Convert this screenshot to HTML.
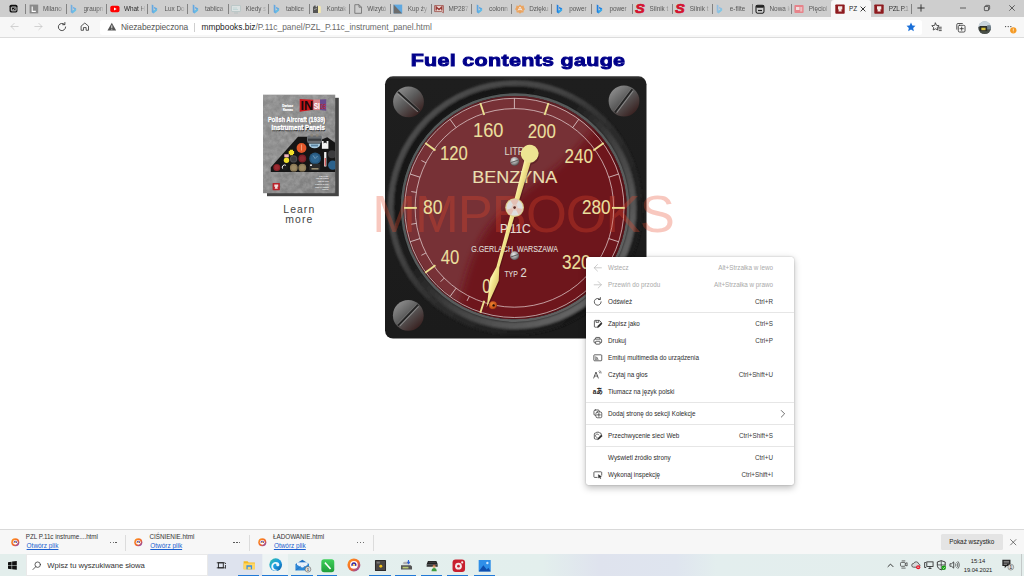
<!DOCTYPE html>
<html lang="pl">
<head>
<meta charset="utf-8">
<title>PZL P.11c instrument panel</title>
<style>
*{box-sizing:border-box;margin:0;padding:0}
html,body{width:1024px;height:576px;overflow:hidden;background:#fff}
body{position:relative;font-family:"Liberation Sans",sans-serif;color:#222}
.abs{position:absolute}
svg{overflow:visible}
/* ---------- tab strip ---------- */
#tabs{position:absolute;left:0;top:0;width:1024px;height:17px;background:#cecece}
.tab{position:absolute;top:0;height:17px;width:40px}
.tab .t{position:absolute;left:18px;top:0;width:20.5px;height:17px;overflow:hidden;font-size:6.4px;line-height:17px;color:#585858;white-space:nowrap;letter-spacing:-.02px;-webkit-mask-image:linear-gradient(90deg,#000 70%,rgba(0,0,0,.12) 99%);mask-image:linear-gradient(90deg,#000 70%,rgba(0,0,0,.12) 99%)}
.tab svg{position:absolute;left:3.6px;top:3.5px;width:10px;height:10px}
.sep{position:absolute;top:3.5px;width:1px;height:10.3px;background:#838383}
#tabact{position:absolute;left:831.3px;top:0;width:40px;height:17px;background:#f7f7f7;border-radius:3px 3px 0 0}
/* ---------- toolbar ---------- */
#bar{position:absolute;left:0;top:17px;width:1024px;height:21px;background:#f7f7f7;border-bottom:1px solid #dcdcdc}
#addr{position:absolute;left:100.3px;top:2.5px;width:821.3px;height:15.5px;background:#fff;border-radius:2.5px}
#addr span{position:absolute;top:0;line-height:15.5px;font-size:8.4px;white-space:nowrap;letter-spacing:0}
#bar svg{position:absolute}
/* ---------- page ---------- */
#title{position:absolute;left:317.8px;top:47.1px;width:400px;text-align:center;font-size:17.4px;font-weight:bold;color:#00008a;letter-spacing:.25px;line-height:26px;-webkit-text-stroke:.9px #00008a;transform:scaleX(1.235);white-space:nowrap}
#learn{position:absolute;left:269.3px;top:204.5px;width:60px;text-align:center;font-size:10.4px;line-height:10.5px;color:#444;letter-spacing:1.08px}
#wm{position:absolute;left:372.4px;top:172px;font-size:52px;line-height:60px;color:rgba(232,72,42,.3);letter-spacing:-.6px;white-space:nowrap}
/* ---------- context menu ---------- */
#menu{position:absolute;left:586px;top:257px;width:208.3px;height:227.8px;background:#fff;border-radius:2.5px;box-shadow:0 2.5px 7px rgba(0,0,0,.26),0 0 1.5px rgba(0,0,0,.3)}
.mi{position:absolute;left:0;width:208px;height:17px;font-size:6.3px;line-height:17px;color:#2b2b2b;white-space:nowrap}
.mi .l{position:absolute;left:22px;top:0}
.mi .r{position:absolute;right:21px;top:0;color:#3a3a3a}
.mi.dis,.mi.dis .r{color:#a9a9a9}
.mi svg{position:absolute;left:6.700px;top:3.700px;width:9.600px;height:9.600px}
.ms{position:absolute;left:0;width:208.3px;height:1px;background:#e6e6e6}
/* ---------- downloads ---------- */
#dl{position:absolute;left:0;top:528.6px;width:1024px;height:25.7px;background:#f7f7f7;border-top:1px solid #d9d9d9}
.dli{position:absolute;top:0;height:24px}
.dli .n{position:absolute;left:25.8px;top:3.4px;font-size:6.3px;line-height:8px;color:#333;white-space:nowrap;letter-spacing:-.02px}
.dli .o{position:absolute;left:26.6px;top:12.9px;font-size:6.45px;line-height:8px;color:#1a5fd0;text-decoration:underline;white-space:nowrap;letter-spacing:0}
.dli .d{position:absolute;top:12.300px;width:8px;height:2px}
.dli .d i{position:absolute;top:0;width:1.3px;height:1.3px;border-radius:50%;background:#444}
.dsep{position:absolute;top:5px;width:1px;height:16px;background:#dcdcdc}
/* ---------- taskbar ---------- */
#task{position:absolute;left:0;top:554.3px;width:1024px;height:21.7px;background:linear-gradient(90deg,#e3eeec 0,#e3eeec 2.5%,#dee3ee 2.6%,#dee3ee 25.6%,#eef4f4 25.65%,#eef4f4 28.1%,#e4efee 28.15%,#e3efed 53%,#dfe3ee 58.5%,#dfe5ef 66%,#e3eeee 70%,#e4eeec 100%)}
#search{position:absolute;left:25.800px;top:0;width:182.700px;height:21.700px;background:#fff;border:1px solid #e9e9e9}
#search span{position:absolute;left:20.5px;top:0;line-height:21px;font-size:7.7px;color:#333;white-space:nowrap;letter-spacing:-.05px}
#task svg{position:absolute;margin-top:-.6px}
.ul{position:absolute;top:20.500px;height:1.200px;background:#1f78d6}
</style>
</head>
<body>
<div id="tabs">
<svg viewBox="0 0 10 10" style="position:absolute;left:8.500px;top:4px;width:9px;height:9px"><rect x=".6" y=".8" width="8.800" height="8.600" rx="1.800" fill="#111"/><rect x="2.600" y="3.400" width="5.200" height="4.200" rx=".6" fill="none" stroke="#fff" stroke-width=".9"/><path d="M3.800 5.500l1 1 1.800-1.800" stroke="#fff" stroke-width=".7" fill="none"/></svg>
<div id="tabact"></div>
<div class="sep" style="left:25px"></div>
<div class="tab" style="left:25px"><svg viewBox="0 0 10 10"><rect x=".6" y=".6" width="8.600" height="8.800" fill="#8a8a8a"/><path d="M3.200 2.400v5h3.600" fill="none" stroke="#fff" stroke-width="1.100"/></svg><span class="t">Milano</span></div>
<div class="sep" style="left:65.5px"></div>
<div class="tab" style="left:65.5px"><svg viewBox="0 0 10 10" opacity="0.8"><g transform="translate(-.2 0) scale(.84 1)"><path d="M2.300 .600l2 .700v5.500l2.500-1.400-1.300-.6-.8-2 4 1.400v2.200L4.300 9.600l-2-1.300z" fill="#5aa7e8"/><path d="M4.300 6.800l2.500-1.400 1.900-1v2.000L4.300 9.600z" fill="#4fd0ee" opacity=".55"/></g></svg><span class="t">graupn</span></div>
<div class="sep" style="left:106px"></div>
<div class="tab" style="left:106px"><svg viewBox="0 0 10 10"><rect x=".3" y="1.800" width="9.200" height="6.500" rx="1.800" fill="#f00"/><path d="M4 3.500v3.100l2.700-1.550z" fill="#fff"/></svg><span class="t" style="color:#2a2a2a">What H</span></div>
<div class="sep" style="left:146.5px"></div>
<div class="tab" style="left:146.5px"><svg viewBox="0 0 10 10" opacity="0.8"><g transform="translate(-.2 0) scale(.84 1)"><path d="M2.300 .600l2 .700v5.500l2.500-1.400-1.300-.6-.8-2 4 1.400v2.200L4.300 9.600l-2-1.300z" fill="#4a9fe6"/><path d="M4.300 6.800l2.500-1.400 1.900-1v2.000L4.300 9.600z" fill="#4fd0ee" opacity=".55"/></g></svg><span class="t">Lux Do</span></div>
<div class="sep" style="left:187px"></div>
<div class="tab" style="left:187px"><svg viewBox="0 0 10 10" opacity="0.8"><g transform="translate(-.2 0) scale(.84 1)"><path d="M2.300 .600l2 .700v5.500l2.500-1.400-1.300-.6-.8-2 4 1.400v2.200L4.300 9.600l-2-1.300z" fill="#4a9fe6"/><path d="M4.300 6.800l2.500-1.400 1.900-1v2.000L4.300 9.600z" fill="#4fd0ee" opacity=".55"/></g></svg><span class="t">tablica</span></div>
<div class="sep" style="left:227.5px"></div>
<div class="tab" style="left:227.5px"><svg viewBox="0 0 10 10" opacity=".55"><rect x=".5" y="1.500" width="9" height="6" rx=".6" fill="#e8f4f4" stroke="#8fb0b0" stroke-width=".6"/><path d="M3 9h4" stroke="#8fb0b0" stroke-width=".7"/><path d="M2 4h4M2 5.500h5" stroke="#9cc" stroke-width=".6"/></svg><span class="t">Kiedy s</span></div>
<div class="sep" style="left:268px"></div>
<div class="tab" style="left:268px"><svg viewBox="0 0 10 10" opacity="0.8"><g transform="translate(-.2 0) scale(.84 1)"><path d="M2.300 .600l2 .700v5.500l2.500-1.400-1.300-.6-.8-2 4 1.400v2.200L4.300 9.600l-2-1.300z" fill="#4a9fe6"/><path d="M4.300 6.800l2.500-1.400 1.900-1v2.000L4.300 9.600z" fill="#4fd0ee" opacity=".55"/></g></svg><span class="t">tablice</span></div>
<div class="sep" style="left:308.6px"></div>
<div class="tab" style="left:308.6px"><svg viewBox="0 0 10 10"><path d="M1 9V3l2.200-2 .8 2.500L6 1.500V9z" fill="#555"/><path d="M6 1.500l2.800 1V9H6z" fill="#f4e9b0"/><path d="M2 5.500l3 -1" stroke="#ddd" stroke-width=".6"/></svg><span class="t">Kontak</span></div>
<div class="sep" style="left:349.3px"></div>
<div class="tab" style="left:349.3px"><svg viewBox="0 0 10 10" fill="none" stroke="#6a6a6a" stroke-width=".8" stroke-linejoin="round"><path d="M1.800 .700h4.200l2.500 2.500v6.100H1.800z"/><path d="M6 .700v2.500h2.500"/></svg><span class="t">Wizytó</span></div>
<div class="sep" style="left:389.7px"></div>
<div class="tab" style="left:389.7px"><svg viewBox="0 0 10 10"><rect x=".6" y=".6" width="8.600" height="8.800" fill="#5fa8e0"/><path d="M.6 .6L9.200 9.400H.6z" fill="#6c6c6c"/></svg><span class="t">Kup ży</span></div>
<div class="sep" style="left:430.5px"></div>
<div class="tab" style="left:430.5px"><svg viewBox="0 0 10 10"><path d="M.6 1.600h8.800v7.200L7.600 7.600H.6z" fill="#ead8d4" stroke="#9a4a44" stroke-width=".8"/><path d="M2.200 6.600V3L5 5.600 7.800 3v3.600" fill="none" stroke="#9a3a35" stroke-width="1.300"/></svg><span class="t">MP287</span></div>
<div class="sep" style="left:471px"></div>
<div class="tab" style="left:471px"><svg viewBox="0 0 10 10" opacity="0.85"><g transform="translate(-.2 0) scale(.84 1)"><path d="M2.300 .600l2 .700v5.500l2.500-1.400-1.300-.6-.8-2 4 1.400v2.200L4.300 9.600l-2-1.300z" fill="#4a9fe6"/><path d="M4.300 6.800l2.500-1.400 1.900-1v2.000L4.300 9.600z" fill="#4fd0ee" opacity=".55"/></g></svg><span class="t">colonn</span></div>
<div class="sep" style="left:511.2px"></div>
<div class="tab" style="left:511.2px"><svg viewBox="0 0 10 10" opacity=".8"><path d="M5 .5l1.600 1.400 2-.3.400 2 1 1.600-1.400 1.300-.1 2.100-2-.1L5 9.800 3.600 8.500l-2 .1-.1-2.100L.1 5.200l1-1.600.4-2 2 .3z" fill="#f39a45"/><path d="M3 6.500l2-3.600 2 3.600M3.800 5.600h2.400" stroke="#fff" stroke-width=".8" fill="none"/></svg><span class="t">Dzięku</span></div>
<div class="sep" style="left:551.3px"></div>
<div class="tab" style="left:551.3px"><svg viewBox="0 0 10 10" opacity="1"><g transform="translate(-.2 0) scale(.84 1)"><path d="M2.300 .600l2 .700v5.500l2.500-1.400-1.300-.6-.8-2 4 1.400v2.200L4.300 9.600l-2-1.300z" fill="#1f7fe0"/><path d="M4.300 6.800l2.500-1.400 1.900-1v2.000L4.300 9.600z" fill="#4fd0ee" opacity=".55"/></g></svg><span class="t">power</span></div>
<div class="sep" style="left:591.4px"></div>
<div class="tab" style="left:591.4px"><svg viewBox="0 0 10 10" opacity="1"><g transform="translate(-.2 0) scale(.84 1)"><path d="M2.300 .600l2 .700v5.500l2.500-1.400-1.300-.6-.8-2 4 1.400v2.200L4.300 9.600l-2-1.300z" fill="#1f7fe0"/><path d="M4.300 6.800l2.500-1.400 1.900-1v2.000L4.300 9.600z" fill="#4fd0ee" opacity=".55"/></g></svg><span class="t">power</span></div>
<div class="sep" style="left:631.6px"></div>
<div class="tab" style="left:631.6px"><svg viewBox="0 0 10 10"><text x=".2" y="9.200" font-family="Liberation Sans,sans-serif" font-size="12" font-weight="bold" font-style="italic" fill="#d3122e" stroke="#d3122e" stroke-width=".7" textLength="9.400" lengthAdjust="spacingAndGlyphs">S</text></svg><span class="t">Silnik t</span></div>
<div class="sep" style="left:671.8px"></div>
<div class="tab" style="left:671.8px"><svg viewBox="0 0 10 10"><text x=".2" y="9.200" font-family="Liberation Sans,sans-serif" font-size="12" font-weight="bold" font-style="italic" fill="#d3122e" stroke="#d3122e" stroke-width=".7" textLength="9.400" lengthAdjust="spacingAndGlyphs">S</text></svg><span class="t">Silnik t</span></div>
<div class="sep" style="left:711.8px"></div>
<div class="tab" style="left:711.8px"><svg viewBox="0 0 10 10" opacity="0.7"><g transform="translate(-.2 0) scale(.84 1)"><path d="M2.300 .600l2 .700v5.500l2.500-1.400-1.300-.6-.8-2 4 1.400v2.200L4.300 9.600l-2-1.300z" fill="#7ab8ea"/><path d="M4.300 6.800l2.500-1.400 1.900-1v2.000L4.300 9.600z" fill="#4fd0ee" opacity=".55"/></g></svg><span class="t">e-flite</span></div>
<div class="sep" style="left:751.5px"></div>
<div class="tab" style="left:751.5px"><svg viewBox="0 0 10 10"><rect x="1" y="1.200" width="8" height="8" rx="1.600" fill="none" stroke="#222" stroke-width="1.100"/><rect x="1" y="1.200" width="8" height="2.600" rx="1.200" fill="#222"/><path d="M3 6.500h4" stroke="#222" stroke-width="1.200"/></svg><span class="t">Nowa k</span></div>
<div class="sep" style="left:790.8px"></div>
<div class="tab" style="left:790.8px"><svg viewBox="0 0 10 10" opacity=".75"><rect x=".4" y="1" width="9.200" height="8" rx="1" fill="#ef6a74"/><rect x="2" y="3" width="3.500" height="3" fill="#fde4e4"/><rect x="6.200" y="3" width="2" height="4.500" fill="#f9b8bb"/></svg><span class="t">Pięciol</span></div>
<div class="tab" style="left:831px"><svg viewBox="0 0 10 10"><rect x=".3" y=".4" width="9.400" height="9.400" rx=".8" fill="#8e1b1f"/><path d="M3 2.200h4.300v3.400H6.200l.6 2H3.400l.5-2H3z" fill="#f3e6e2"/></svg><span class="t" style="color:#222;width:11px;-webkit-mask-image:none;mask-image:none">PZ</span></div>
<div class="tab" style="left:870.7px"><svg viewBox="0 0 10 10"><rect x=".3" y=".4" width="9.400" height="9.400" rx=".8" fill="#8e1b1f"/><path d="M3 2.200h4.300v3.400H6.200l.6 2H3.400l.5-2H3z" fill="#f3e6e2"/></svg><span class="t" style="letter-spacing:-.3px;color:#333">PZL P.1</span></div>
<div class="sep" style="left:911.3px"></div>
<svg viewBox="0 0 10 10" style="position:absolute;left:859.500px;top:5.700px;width:6px;height:6px" stroke="#222" stroke-width="1.500" fill="none"><path d="M1 1l8 8M9 1L1 9"/></svg>
<svg viewBox="0 0 10 10" style="position:absolute;left:916.500px;top:4.300px;width:8px;height:8px" stroke="#222" stroke-width="1.100" fill="none"><path d="M5 .5v9M.5 5h9"/></svg>
<svg viewBox="0 0 10 10" style="position:absolute;left:959.500px;top:5px;width:6px;height:6px" stroke="#333" stroke-width="1.200" fill="none"><path d="M0 5h10"/></svg>
<svg viewBox="0 0 10 10" style="position:absolute;left:984px;top:5px;width:6px;height:6px" stroke="#333" stroke-width="1.200" fill="none"><rect x=".6" y="2.400" width="7" height="7" rx="1"/><path d="M2.600 2.400V1.600a1 1 0 0 1 1-1h4.800a1 1 0 0 1 1 1v4.800a1 1 0 0 1-1 1h-.8"/></svg>
<svg viewBox="0 0 10 10" style="position:absolute;left:1008.700px;top:5px;width:6px;height:6px" stroke="#333" stroke-width="1.200" fill="none"><path d="M.5 .5l9 9M9.500 .5l-9 9"/></svg>
</div>
<div id="bar">
<svg viewBox="0 0 16 16" style="left:10.200px;top:5.300px;width:9px;height:9px" fill="none" stroke="#c4c4c4" stroke-width="1.300" stroke-linecap="round" stroke-linejoin="round"><path d="M14.500 8H1.800M7.400 2.400 1.800 8l5.600 5.600"/></svg>
<svg viewBox="0 0 16 16" style="left:33.800px;top:5.300px;width:9px;height:9px" fill="none" stroke="#c4c4c4" stroke-width="1.300" stroke-linecap="round" stroke-linejoin="round"><path d="M1.500 8h12.700M8.600 2.400 14.200 8l-5.600 5.600"/></svg>
<svg viewBox="0 0 16 16" style="left:56.700px;top:5.300px;width:10px;height:10px" fill="none" stroke="#333" stroke-width="1.400" stroke-linecap="round" stroke-linejoin="round"><path d="M13.800 8a5.800 5.800 0 1 1-2-4.400"/><path d="M12.600 .8v3.500H9.100"/></svg>
<svg viewBox="0 0 16 16" style="left:80.400px;top:5.300px;width:9.600px;height:9.600px" fill="none" stroke="#333" stroke-width="1.350" stroke-linejoin="round"><path d="M1.800 13.800V6.900L8 1.700l6.200 5.200v6.900h-4V9.300H5.800v4.500z"/></svg>
<div id="addr">
<svg viewBox="0 0 16 16" style="left:6.900px;top:2.900px;width:9.600px;height:9.400px"><path d="M8 1.200 15.400 14.600H.6z" fill="#555"/><path d="M8 5.800v4.600M8 11.600v1.400" stroke="#fff" stroke-width="1.500"/></svg>
<span style="left:20.600px;color:#555;letter-spacing:-.08px">Niezabezpieczona</span>
<i style="position:absolute;left:93.700px;top:3.500px;width:1px;height:8.500px;background:#cfcfcf"></i>
<span style="left:101.200px;color:#1f1f1f">mmpbooks.biz<span style="position:static;color:#6a6a6a">/P.11c_panel/PZL_P.11c_instrument_panel.html</span></span>
<svg viewBox="0 0 16 16" style="left:805.500px;top:2.800px;width:10px;height:10px"><path d="M8 .8l2.200 4.700 5 .6-3.700 3.500 1 5L8 12.100 3.500 14.600l1-5L.8 6.100l5-.6z" fill="#1a6fd8"/></svg>
</div>
<svg viewBox="0 0 16 16" style="left:931.300px;top:5.300px;width:11px;height:11px" fill="none" stroke="#333" stroke-width="1.200" stroke-linejoin="round" stroke-linecap="round"><path d="M6.500 1.500l1.600 3.400 3.700.5-2.700 2.600.6 3.700-3.200-1.800-3.300 1.800.6-3.700L1.100 5.400l3.800-.5z"/><path d="M11 10h4M11.800 12.500h3.200M10.500 7.600h4.500"/></svg>
<svg viewBox="0 0 16 16" style="left:954.500px;top:5px;width:11px;height:11px" fill="none" stroke="#333" stroke-width="1.200" stroke-linejoin="round" stroke-linecap="round"><rect x="4.800" y="4.800" width="9.800" height="9.800" rx="1.800"/><path d="M9.700 7.300v4.800M7.300 9.700h4.800"/><path d="M2.600 10.500V4a1.800 1.800 0 0 1 1.800-1.800h6.300"/></svg>
<svg viewBox="0 0 16 16" style="left:977.700px;top:3.600px;width:13.400px;height:13.400px"><defs><clipPath id="cav"><circle cx="8" cy="8" r="7.600"/></clipPath></defs><g clip-path="url(#cav)"><rect width="16" height="16" fill="#9aa8b4"/><rect y="0" width="16" height="6" fill="#c9d4dc"/><rect x="0" y="7" width="16" height="9" fill="#4a4f48"/><rect x="2" y="6" width="9" height="6" fill="#2a2c2a"/><rect x="4" y="8" width="5" height="3" fill="#d8c23a"/><rect x="11" y="5" width="5" height="5" fill="#71808c"/></g></svg>
<svg viewBox="0 0 16 16" style="left:1004px;top:5px;width:10px;height:10px"><circle cx="2.500" cy="7.200" r="1" fill="#333"/><circle cx="6.700" cy="7.200" r="1" fill="#333"/><circle cx="10.900" cy="7.200" r="1" fill="#333"/></svg>
<svg viewBox="0 0 10 10" style="left:1010px;top:9.800px;width:6.600px;height:6.600px"><circle cx="5" cy="5" r="4.800" fill="#f59a23"/><path d="M5 2.200v3.600M5 7v1" stroke="#fff" stroke-width="1.100"/></svg>
</div>
<div id="title">Fuel contents gauge</div>
<svg id="book" width="84" height="110" viewBox="259 91 84 110" style="position:absolute;left:259px;top:91px">
<defs>
<filter id="fn" x="0" y="0" width="100%" height="100%"><feTurbulence type="fractalNoise" baseFrequency=".18" numOctaves="3" seed="7" result="n"/><feColorMatrix in="n" type="matrix" values="0 0 0 0 .56  0 0 0 0 .56  0 0 0 0 .56  .9 .9 .9 0 -1.05"/><feComposite operator="in" in2="SourceGraphic"/></filter>
<clipPath id="ccov"><rect x="263" y="94.7" width="72.2" height="98.5"/></clipPath>
<linearGradient id="gcov" x1="0" y1="0" x2="1" y2="1"><stop offset="0" stop-color="#8b8b8b"/><stop offset=".5" stop-color="#868686"/><stop offset="1" stop-color="#7a7a7a"/></linearGradient>
</defs>
<rect x="267" y="97.8" width="71.8" height="98.4" fill="#444"/>
<rect x="263" y="94.7" width="72.2" height="98.5" fill="url(#gcov)"/>
<rect x="263" y="94.7" width="72.2" height="98.5" fill="#b4b4b4" filter="url(#fn)" opacity=".55"/>
<g clip-path="url(#ccov)">
<path d="M270.8 167.2L298 136.7H307.2V141H321.8V139.5L327.3 137.3L335.5 143V171.9H270.8z" fill="#151515"/>
<rect x="307.2" y="135.5" width="14.6" height="7.5" rx="1.5" fill="#6a6e72"/><rect x="310.5" y="134.2" width="2.6" height="2.4" fill="#8a8478"/><rect x="315.8" y="134.2" width="2.6" height="2.4" fill="#8a8478"/><rect x="308" y="138.6" width="13" height="2.2" fill="#3a3d40"/>
<path d="M308.6 143.6h11.9a6 5.4 0 0 1-11.9 0z" fill="#a8cbe0"/><rect x="311" y="144.6" width="7" height="1.8" fill="#5d86a4"/>
<circle cx="301.5" cy="148" r="4.9" fill="#e2582a"/><path d="M301.5 144.5v6" stroke="#f7c9a8" stroke-width=".6"/>
<rect x="321.9" y="141" width="6.5" height="7.8" fill="#f2f2f2"/><path d="M323.6 141v2.600l1.500-1 1.500 1V141" fill="#151515"/>
<path d="M289.800 149.800h3.200v1.100h1.100v3.200h-1.100v1.100h-3.200v-1.100h-1.100v-3.200h1.100z" fill="#f0e02a"/>
<rect x="284.300" y="154.300" width="4.500" height="3" fill="#f0b4bc"/>
<circle cx="286.500" cy="160.200" r="2.700" fill="#f0e02a"/>
<circle cx="293.600" cy="158.900" r="3.700" fill="#4a4a4c"/><circle cx="293.600" cy="158.900" r="2.500" fill="#3a3a3c"/>
<circle cx="302.300" cy="158.500" r="3.900" fill="#7c1f26"/><circle cx="302.300" cy="158.500" r="2.600" fill="#8b2a30"/>
<circle cx="315.100" cy="158.500" r="5.900" fill="#27587e"/><circle cx="315.100" cy="158.500" r="4.300" fill="#2f6690"/><path d="M315.100 158.500l-2-3M315.100 158.500l2.500-2.500" stroke="#a9c4d8" stroke-width=".5"/>
<rect x="324.100" y="151.900" width="2.300" height="14.600" rx=".6" fill="#efefef"/><rect x="324.700" y="158" width="1.100" height="7.800" fill="#c83a3a"/>
<circle cx="332" cy="154.300" r="4" fill="#3c3c3e"/>
<circle cx="332.700" cy="165.200" r="4.600" fill="#2c628c"/>
<circle cx="276.800" cy="167.400" r="3.500" fill="#8a1f26"/><circle cx="276.800" cy="167.400" r="2.300" fill="#9a2b32"/>
<circle cx="284.700" cy="167.200" r="3.300" fill="#1c1c1c"/><path d="M282.600 168.600a2.400 2.400 0 0 1 3.300-3.300" fill="none" stroke="#f0f0f0" stroke-width="1"/>
<circle cx="293.800" cy="167.700" r="3.900" fill="#8c7a56"/><circle cx="293.800" cy="167.700" r="2.500" fill="#9c8a64"/>
<circle cx="302.300" cy="167.700" r="3.900" fill="#8c7a56"/><circle cx="302.300" cy="167.700" r="2.500" fill="#9c8a64"/>
<rect x="309.200" y="163.800" width="11" height="6.600" rx=".8" fill="#2b2b2b"/><rect x="310" y="164.400" width="2" height="1.600" fill="#ddd"/><rect x="311.500" y="168.300" width="7" height="1.100" fill="#c8b890"/>
</g>
<g><path d="M299.700 99l13.800 .8v10l-13.800 2z" fill="#c8161d"/><rect x="313.500" y="99.500" width="6.500" height="10.600" fill="#d9868c"/><path d="M320 99.500l6.200 -.3v11.600l-6.200 -.7z" fill="#6a4a8e"/>
<text x="300.400" y="110.200" font-family="Liberation Sans,sans-serif" font-weight="bold" font-size="13.500" textLength="12.600" lengthAdjust="spacingAndGlyphs" fill="#1a0a0a">IN</text>
<text x="313.700" y="108.800" font-family="Liberation Sans,sans-serif" font-weight="bold" font-size="9.500" textLength="6.200" lengthAdjust="spacingAndGlyphs" fill="#fff">SI</text>
<text x="320.300" y="108.500" font-family="Liberation Sans,sans-serif" font-weight="bold" font-size="8" textLength="5.600" lengthAdjust="spacingAndGlyphs" fill="#b0283a">DE</text></g>
<g font-family="Liberation Sans,sans-serif" font-weight="bold" fill="#fff" stroke="#fff" stroke-width=".2" font-size="3.700"><text x="282.300" y="107.300" textLength="10.600" lengthAdjust="spacingAndGlyphs">Dariusz</text><text x="282.900" y="111" textLength="10" lengthAdjust="spacingAndGlyphs">Karnas</text></g>
<g font-family="Liberation Sans,sans-serif" font-weight="bold" font-size="6.400" fill="#fff" stroke="#fff" stroke-width=".42" paint-order="stroke"><text x="268.300" y="122.300" fill="#333" stroke="#333" stroke-width=".5" textLength="57.400" lengthAdjust="spacingAndGlyphs">Polish Aircraft (1939)</text><text x="267.900" y="121.800" textLength="57.400" lengthAdjust="spacingAndGlyphs">Polish Aircraft (1939)</text><text x="271.900" y="130.600" fill="#333" stroke="#333" stroke-width=".5" textLength="53.400" lengthAdjust="spacingAndGlyphs">Instrument Panels</text><text x="271.500" y="130.100" textLength="53.400" lengthAdjust="spacingAndGlyphs">Instrument Panels</text></g>
<g font-family="Liberation Sans,sans-serif" font-weight="bold" font-size="2.300" fill="#f2f2f2" text-anchor="end">
<text x="328.500" y="176.80" textLength="9.5" lengthAdjust="spacingAndGlyphs">PZL P.11c</text>
<text x="328.500" y="179.48" textLength="12.6" lengthAdjust="spacingAndGlyphs">PZL.23 Karaś</text>
<text x="328.500" y="182.16" textLength="10.5" lengthAdjust="spacingAndGlyphs">PZL.37 Łoś</text>
<text x="328.500" y="184.84" textLength="13.2" lengthAdjust="spacingAndGlyphs">Lublin R-XIII</text>
<text x="328.500" y="187.52" textLength="13.2" lengthAdjust="spacingAndGlyphs">RWD-14 Czapla</text>
<text x="328.500" y="190.20" textLength="6.3" lengthAdjust="spacingAndGlyphs">PWS-26</text>
</g>
<rect x="272.600" y="182.900" width="7.300" height="7.300" rx=".6" fill="#b8232a"/><path d="M274.300 184.400h3.900v2.300h-.9l.5 2h-3.100l.5-2h-.9z" fill="#f3dede"/>
</svg>
<div id="learn">Learn<br>more</div>
<svg id="gauge" width="320" height="272" viewBox="364 72 320 272" style="position:absolute;left:364px;top:72px">
<defs>
<linearGradient id="gbox" x1="0" y1="0" x2="0" y2="1"><stop offset="0" stop-color="#343434"/><stop offset=".006" stop-color="#2c2c2c"/><stop offset=".012" stop-color="#1e1e1e"/><stop offset="1" stop-color="#1b1b1b"/></linearGradient>
<linearGradient id="lgo" gradientUnits="userSpaceOnUse" x1="423.1" y1="115.6" x2="607.1" y2="299.6"><stop offset="0" stop-color="#4c4c4c"/><stop offset=".3" stop-color="#444"/><stop offset=".55" stop-color="#2c2c2c"/><stop offset="1" stop-color="#171717"/></linearGradient>
<linearGradient id="lgi" gradientUnits="userSpaceOnUse" x1="430.1" y1="122.6" x2="600.1" y2="292.6"><stop offset="0" stop-color="#141414"/><stop offset=".38" stop-color="#1e1e1e"/><stop offset=".6" stop-color="#404040"/><stop offset="1" stop-color="#666"/></linearGradient>
<linearGradient id="lgr" gradientUnits="userSpaceOnUse" x1="435.1" y1="127.6" x2="595.1" y2="287.6"><stop offset="0" stop-color="#545a5a"/><stop offset=".5" stop-color="#565a5a"/><stop offset="1" stop-color="#606060"/></linearGradient>
<linearGradient id="gscr" x1="0.15" y1="0.1" x2="0.85" y2="0.9"><stop offset="0" stop-color="#8c8c8c"/><stop offset=".45" stop-color="#5c5c5c"/><stop offset="1" stop-color="#38201f"/></linearGradient>
<radialGradient id="gsm" cx=".4" cy=".35" r=".7"><stop offset="0" stop-color="#e8e8e8"/><stop offset=".6" stop-color="#999"/><stop offset="1" stop-color="#444"/></radialGradient>
<radialGradient id="gpin" cx=".4" cy=".4" r=".7"><stop offset="0" stop-color="#f08a30"/><stop offset=".7" stop-color="#c8501a"/><stop offset="1" stop-color="#6a2410"/></radialGradient>
<linearGradient id="gndl" x1="0" y1="0" x2="1" y2="0"><stop offset="0" stop-color="#fff9b8"/><stop offset=".45" stop-color="#f2e58c"/><stop offset="1" stop-color="#dccb74"/></linearGradient>
<radialGradient id="gdark" gradientUnits="userSpaceOnUse" cx="661.6" cy="323.9" r="188"><stop offset="0" stop-color="#6e181c"/><stop offset=".95" stop-color="#6e181c"/><stop offset="1" stop-color="#6e181c" stop-opacity="0"/></radialGradient>
<clipPath id="cdial"><circle cx="515.1" cy="207.6" r="111.4"/></clipPath>
<clipPath id="cbox"><rect x="385" y="76.3" width="261.5" height="262.3" rx="8"/></clipPath>
<filter id="fsoft" filterUnits="userSpaceOnUse" x="380" y="60" width="360" height="320"><feGaussianBlur stdDeviation="3.5"/></filter>
<filter id="fb" x="-5%" y="-5%" width="110%" height="110%"><feGaussianBlur stdDeviation="1.1"/></filter>
</defs>
<rect x="385" y="76.3" width="261.5" height="262.3" rx="8" fill="url(#gbox)"/>
<g transform="translate(408.5 101.8)"><circle r="15.4" fill="url(#gscr)"/><g transform="rotate(42)"><rect x="-14.6" y="-1.3" width="29.2" height="2" rx="1" fill="#242424"/><rect x="-13.8" y="0.6" width="27.6" height="1.1" rx=".5" fill="#a0a0a0" opacity=".65"/><rect x="-13.8" y="-2.1" width="27.6" height=".8" rx=".4" fill="#999" opacity=".3"/></g></g>
<g transform="translate(624 101)"><circle r="15.4" fill="url(#gscr)"/><g transform="rotate(-53)"><rect x="-14.6" y="-1.3" width="29.2" height="2" rx="1" fill="#242424"/><rect x="-13.8" y="0.6" width="27.6" height="1.1" rx=".5" fill="#a0a0a0" opacity=".65"/><rect x="-13.8" y="-2.1" width="27.6" height=".8" rx=".4" fill="#999" opacity=".3"/></g></g>
<g transform="translate(408.3 315.4)"><circle r="15.4" fill="url(#gscr)"/><g transform="rotate(-46)"><rect x="-14.6" y="-1.3" width="29.2" height="2" rx="1" fill="#242424"/><rect x="-13.8" y="0.6" width="27.6" height="1.1" rx=".5" fill="#a0a0a0" opacity=".65"/><rect x="-13.8" y="-2.1" width="27.6" height=".8" rx=".4" fill="#999" opacity=".3"/></g></g>
<g transform="translate(623.5 315)"><circle r="15.4" fill="url(#gscr)"/><g transform="rotate(-50)"><rect x="-14.6" y="-1.3" width="29.2" height="2" rx="1" fill="#242424"/><rect x="-13.8" y="0.6" width="27.6" height="1.1" rx=".5" fill="#a0a0a0" opacity=".65"/><rect x="-13.8" y="-2.1" width="27.6" height=".8" rx=".4" fill="#999" opacity=".3"/></g></g>
<g clip-path="url(#cbox)"><circle cx="515.1" cy="207.6" r="128.6" fill="#1a1a1a"/><g filter="url(#fb)" fill="none">
<circle cx="515.1" cy="207.6" r="124.6" stroke="url(#lgo)" stroke-width="6"/>
<circle cx="515.1" cy="207.6" r="117.8" stroke="url(#lgi)" stroke-width="7"/>
</g>
<circle cx="515.1" cy="207.6" r="113" fill="none" stroke="url(#lgr)" stroke-width="2.6"/>
</g>
<circle cx="515.1" cy="207.6" r="111.5" fill="#76303a"/>
<circle cx="515.1" cy="207.6" r="111.5" fill="#773136"/>
<g clip-path="url(#cdial)"><path d="M612 100C610.0 103.0 604.5 111.3 600 118C595.5 124.7 591.3 132.5 585 140C578.7 147.5 569.5 156.3 562 163C554.5 169.7 547.5 174.2 540 180C532.5 185.8 523.8 192.2 517 198C510.2 203.8 504.5 209.0 499 215C493.5 221.0 488.3 227.2 484 234C479.7 240.8 476.2 248.3 473 256C469.8 263.7 467.5 271.8 465 280C462.5 288.2 460.2 296.7 458 305C455.8 313.3 453.0 325.8 452 330L452 360L720 360L720 80L612 80Z" fill="#6e181c" filter="url(#fsoft)"/></g>
<circle cx="515.1" cy="207.6" r="110.4" fill="none" stroke="#3a0c10" stroke-width="2.2" opacity=".45"/>
<circle cx="514.4" cy="207.9" r="109.6" fill="none" stroke="#e6d4d4" stroke-width=".85" opacity=".85"/>
<circle cx="514.4" cy="207.9" r="99.3" fill="none" stroke="#e6d4d4" stroke-width=".85" opacity=".85"/>
<text x="372.3" y="231.8" font-family="Liberation Sans, sans-serif" font-size="52.6" letter-spacing="-1.05" fill="#e8482a" fill-opacity=".3">MMPBOOKS</text>
<line x1="484.24" y1="300.72" x2="480.32" y2="312.80" stroke="#ebe08e" stroke-width="1.9"/>
<line x1="469.32" y1="296.38" x2="467.00" y2="300.92" stroke="#eadcdc" stroke-width=".85" opacity=".9"/>
<line x1="456.03" y1="288.24" x2="449.98" y2="296.57" stroke="#eadcdc" stroke-width=".85" opacity=".9"/>
<line x1="444.18" y1="278.12" x2="440.58" y2="281.72" stroke="#eadcdc" stroke-width=".85" opacity=".9"/>
<line x1="435.44" y1="265.27" x2="425.17" y2="272.73" stroke="#ebe08e" stroke-width="1.9"/>
<line x1="425.92" y1="252.98" x2="421.38" y2="255.30" stroke="#eadcdc" stroke-width=".85" opacity=".9"/>
<line x1="419.96" y1="238.59" x2="410.16" y2="241.77" stroke="#eadcdc" stroke-width=".85" opacity=".9"/>
<line x1="416.32" y1="223.43" x2="411.29" y2="224.23" stroke="#eadcdc" stroke-width=".85" opacity=".9"/>
<line x1="416.80" y1="207.90" x2="404.10" y2="207.90" stroke="#ebe08e" stroke-width="1.9"/>
<line x1="416.32" y1="192.37" x2="411.29" y2="191.57" stroke="#eadcdc" stroke-width=".85" opacity=".9"/>
<line x1="419.96" y1="177.21" x2="410.16" y2="174.03" stroke="#eadcdc" stroke-width=".85" opacity=".9"/>
<line x1="425.92" y1="162.82" x2="421.38" y2="160.50" stroke="#eadcdc" stroke-width=".85" opacity=".9"/>
<line x1="435.44" y1="150.53" x2="425.17" y2="143.07" stroke="#ebe08e" stroke-width="1.9"/>
<line x1="456.03" y1="127.56" x2="449.98" y2="119.23" stroke="#eadcdc" stroke-width=".85" opacity=".9"/>
<line x1="484.24" y1="115.08" x2="480.32" y2="103.00" stroke="#ebe08e" stroke-width="1.9"/>
<line x1="514.40" y1="108.60" x2="514.40" y2="98.30" stroke="#eadcdc" stroke-width=".85" opacity=".9"/>
<line x1="544.56" y1="115.08" x2="548.48" y2="103.00" stroke="#ebe08e" stroke-width="1.9"/>
<line x1="572.77" y1="127.56" x2="578.82" y2="119.23" stroke="#eadcdc" stroke-width=".85" opacity=".9"/>
<line x1="593.36" y1="150.53" x2="603.63" y2="143.07" stroke="#ebe08e" stroke-width="1.9"/>
<line x1="608.84" y1="177.21" x2="618.64" y2="174.03" stroke="#eadcdc" stroke-width=".85" opacity=".9"/>
<line x1="612.00" y1="207.90" x2="624.70" y2="207.90" stroke="#ebe08e" stroke-width="1.9"/>
<line x1="608.84" y1="238.59" x2="618.64" y2="241.77" stroke="#eadcdc" stroke-width=".85" opacity=".9"/>
<line x1="593.36" y1="265.27" x2="603.63" y2="272.73" stroke="#ebe08e" stroke-width="1.9"/>
<g font-family="Liberation Sans, sans-serif" font-size="19.5" fill="#eadf9e" stroke="#eadf9e" stroke-width=".1">
<text x="482.3" y="293.1" textLength="8.6" lengthAdjust="spacingAndGlyphs">0</text>
<text x="440.8" y="263.9" textLength="18.6" lengthAdjust="spacingAndGlyphs">40</text>
<text x="423.0" y="214.2" textLength="19.5" lengthAdjust="spacingAndGlyphs">80</text>
<text x="440.0" y="159.5" textLength="27.8" lengthAdjust="spacingAndGlyphs">120</text>
<text x="473.0" y="136.7" textLength="30.4" lengthAdjust="spacingAndGlyphs">160</text>
<text x="527.7" y="137.7" textLength="28.2" lengthAdjust="spacingAndGlyphs">200</text>
<text x="564.4" y="163.3" textLength="28.5" lengthAdjust="spacingAndGlyphs">240</text>
<text x="581.9" y="214.1" textLength="28.7" lengthAdjust="spacingAndGlyphs">280</text>
<text x="561.9" y="269.4" textLength="28.7" lengthAdjust="spacingAndGlyphs">320</text>
</g>
<g font-family="Liberation Sans, sans-serif" fill="#eadfb0" stroke="#eadfb0" stroke-width=".15">
<text x="504.6" y="155.3" font-size="10" textLength="25.5" lengthAdjust="spacingAndGlyphs" fill="#d8d0c2" stroke="#d8d0c2">LITRY</text>
<text x="472.2" y="183" font-size="17" textLength="85" lengthAdjust="spacingAndGlyphs">BENZYNA</text>
<text x="500" y="232.6" font-size="13.2" textLength="30.6" lengthAdjust="spacingAndGlyphs" fill="#e4dcd4" stroke="#e4dcd4">P.11C</text>
<text x="471.3" y="252" font-size="9" textLength="86.6" lengthAdjust="spacingAndGlyphs" fill="#ded7d0" stroke="#ded7d0">G.GERLACH_WARSZAWA</text>
<text x="504.4" y="277.4" font-size="8.7" textLength="13.4" lengthAdjust="spacingAndGlyphs" fill="#ded7d0" stroke="#ded7d0">TYP</text>
<text x="520.4" y="277.4" font-size="12.2" textLength="6.2" lengthAdjust="spacingAndGlyphs" fill="#ded7d0" stroke="#ded7d0">2</text>
</g>
<circle cx="514.7" cy="161.3" r="4.4" fill="url(#gsm)"/><line x1="511.1" y1="162.5" x2="518.3000000000001" y2="160.10000000000002" stroke="#555" stroke-width=".9"/>
<circle cx="514.6" cy="255.7" r="4.4" fill="url(#gsm)"/><line x1="511.0" y1="256.9" x2="518.2" y2="254.5" stroke="#555" stroke-width=".9"/>
<circle cx="493" cy="305.2" r="4" fill="url(#gpin)"/><circle cx="493.6" cy="305.4" r="1.2" fill="#1a0a05"/>
<g transform="translate(514.6 207.6) rotate(15.63)">
<g opacity=".3" transform="translate(1.2 1.6)"><path d="M-3.5 -54.0L-2.4 -9 L-1.5 62.1 L-4.4 74.7 L0 103.5 L4.4 74.7 L1.5 62.1 L2.4 -9 L3.5 -54.0Z" fill="#2a0508"/><circle cx="0" cy="-56.0" r="8.9" fill="#2a0508"/></g>
<path d="M-3.5 -54.0L-2.4 -9 L-1.5 62.1 L-4.4 74.7 L0 103.5 L4.4 74.7 L1.5 62.1 L2.4 -9 L3.5 -54.0Z" fill="url(#gndl)"/><circle cx="0" cy="-56.0" r="8.9" fill="#ede492"/>
</g>
<g transform="translate(514.6 207.6)"><circle r="9.4" fill="#dccb8c"/><circle r="8.2" fill="#dedede"/><path d="M0 0L-4.10 -7.10A8.2 8.2 0 0 1 4.10 -7.10Z" fill="#e4c0b4"/><path d="M0 0L8.08 1.42A8.2 8.2 0 0 1 4.10 7.10Z" fill="#e4c0b4"/><path d="M0 0L-3.47 7.43A8.2 8.2 0 0 1 -7.92 2.12Z" fill="#e4c0b4"/><circle r="3" fill="#e6cabf"/><circle r="1.3" fill="#5a2a25"/></g>
</svg>
<div id="menu">
<div class="mi dis" style="top:2.1px"><svg viewBox="0 0 16 16" fill="none" stroke="#b4b4b4" stroke-width="1.15" stroke-linecap="round" stroke-linejoin="round"><path d="M14 8H2.2M7.4 2.6 2 8l5.4 5.4"/></svg><span class="l">Wstecz</span><span class="r">Alt+Strzałka w lewo</span></div>
<div class="mi dis" style="top:19.2px"><svg viewBox="0 0 16 16" fill="none" stroke="#b4b4b4" stroke-width="1.15" stroke-linecap="round" stroke-linejoin="round"><path d="M2 8h11.8M8.6 2.6 14 8l-5.4 5.4"/></svg><span class="l">Przewiń do przodu</span><span class="r">Alt+Strzałka w prawo</span></div>
<div class="mi" style="top:36.3px"><svg viewBox="0 0 16 16" fill="none" stroke="#2b2b2b" stroke-width="1.25" stroke-linecap="round" stroke-linejoin="round"><path d="M13.6 8a5.7 5.7 0 1 1-2-4.3"/><path d="M12.3.9v3.3H9"/></svg><span class="l">Odśwież</span><span class="r">Ctrl+R</span></div>
<div class="ms" style="top:55.4px"></div>
<div class="mi" style="top:58.1px"><svg viewBox="0 0 16 16" fill="none" stroke="#2b2b2b" stroke-width="1.25" stroke-linejoin="round"><path d="M6.300 13.700H3.700a1.400 1.400 0 0 1-1.400-1.400V3.700a1.400 1.400 0 0 1 1.400-1.400h6.900l3.100 3.100v1.500"/><path d="M5 2.500v3h4.600v-3"/><path d="M14.600 8.600l-5 5-2.700.9.900-2.700 5-5a1.270 1.270 0 0 1 1.800 1.800z" fill="#2b2b2b" stroke-width=".5"/></svg><span class="l">Zapisz jako</span><span class="r">Ctrl+S</span></div>
<div class="mi" style="top:75.2px"><svg viewBox="0 0 16 16" fill="none" stroke="#2b2b2b" stroke-width="1.25" stroke-linejoin="round"><path d="M4.4 5.2V3.4a1 1 0 0 1 1-1h5.2a1 1 0 0 1 1 1v1.8"/><path d="M4.4 11.4H3a1.4 1.4 0 0 1-1.400-1.400V6.900a1.700 1.700 0 0 1 1.700-1.700h9.400a1.700 1.700 0 0 1 1.700 1.700V10a1.400 1.400 0 0 1-1.400 1.400h-1.400"/><rect x="4.400" y="8.800" width="7.200" height="4.800" rx=".8" fill="#fff"/></svg><span class="l">Drukuj</span><span class="r">Ctrl+P</span></div>
<div class="mi" style="top:92.3px"><svg viewBox="0 0 16 16" fill="none" stroke="#2b2b2b" stroke-width="1.2" stroke-linejoin="round"><rect x="1.400" y="3" width="13.200" height="10" rx="1.300"/><path d="M3.700 8.300a2.800 2.800 0 0 1 2.800 2.800M3.700 6.300a4.800 4.800 0 0 1 4.800 4.800" stroke-width="1" stroke-linecap="round"/><circle cx="4" cy="10.800" r=".75" fill="#2b2b2b" stroke="none"/></svg><span class="l">Emituj multimedia do urządzenia</span></div>
<div class="mi" style="top:109.3px"><svg viewBox="0 0 16 16" fill="none" stroke="#2b2b2b" stroke-width="1.25" stroke-linecap="round" stroke-linejoin="round"><path d="M1.200 13.400 5 3.400l3.800 10"/><path d="M2.600 10.100h4.800" stroke-width="1.100"/><path d="M10 2.400a3 3 0 0 1 1.300 2.500M11.600 1a5 5 0 0 1 2 4" stroke-width="1"/></svg><span class="l">Czytaj na głos</span><span class="r">Ctrl+Shift+U</span></div>
<div class="mi" style="top:126.4px"><svg viewBox="0 0 16 16"><text x="-.6" y="12.400" font-family="Liberation Sans, Noto Sans CJK JP, sans-serif" font-size="12.500" font-weight="bold" fill="#2b2b2b" textLength="17" lengthAdjust="spacingAndGlyphs">aあ</text></svg><span class="l">Tłumacz na język polski</span></div>
<div class="ms" style="top:145.2px"></div>
<div class="mi" style="top:148.3px"><svg viewBox="0 0 16 16" fill="none" stroke="#2b2b2b" stroke-width="1.2" stroke-linecap="round" stroke-linejoin="round"><rect x="1.600" y="1.600" width="9" height="9" rx="2.200"/><rect x="5" y="5" width="9.600" height="9.600" rx="2.200" fill="#fff"/><path d="M9.800 7.300v5M7.300 9.800h5"/></svg><span class="l">Dodaj stronę do sekcji Kolekcje</span><svg viewBox="0 0 16 16" fill="none" stroke="#444" stroke-width="1.300" stroke-linecap="round" stroke-linejoin="round" style="left:192.200px"><path d="M5.500 2.500 11 8l-5.500 5.500"/></svg></div>
<div class="ms" style="top:167.4px"></div>
<div class="mi" style="top:170.1px"><svg viewBox="0 0 16 16" fill="none" stroke="#2b2b2b" stroke-width="1.2" stroke-linecap="round" stroke-linejoin="round"><path d="M7 13.600H4a1.800 1.800 0 0 1-1.800-1.800V5.200A1.800 1.800 0 0 1 4 3.400h.800l1.200-1.400h4l1.200 1.400H12a1.800 1.800 0 0 1 1.800 1.800v1"/><path d="M9.800 6.600a3 3 0 1 0-3 4.400" stroke-width="1.100"/><path d="M14.800 9l-4.800 4.800-2.600.8.800-2.600L13 7.200a1.270 1.270 0 0 1 1.800 1.800z" fill="#2b2b2b" stroke-width=".5"/></svg><span class="l">Przechwycenie sieci Web</span><span class="r">Ctrl+Shift+S</span></div>
<div class="ms" style="top:189.3px"></div>
<div class="mi" style="top:192px"><span class="l">Wyświetl źródło strony</span><span class="r">Ctrl+U</span></div>
<div class="mi" style="top:209.1px"><svg viewBox="0 0 16 16" fill="none" stroke="#2b2b2b" stroke-width="1.2" stroke-linejoin="round"><path d="M7.600 12.400H2.800a1.300 1.300 0 0 1-1.300-1.300V4.300A1.300 1.300 0 0 1 2.800 3h10.400a1.300 1.300 0 0 1 1.300 1.300v5"/><path d="M8.800 7.600l5.400 3.400-2.300.5 1.300 2.400-1.100.6-1.300-2.400-1.600 1.600z" fill="#2b2b2b" stroke-width=".5"/></svg><span class="l">Wykonaj inspekcję</span><span class="r">Ctrl+Shift+I</span></div>
</div>
<div id="dl">
<div class="dli" style="left:0px">
<svg viewBox="0 0 20 20" style="position:absolute;left:10.700px;top:8.500px;width:8.600px;height:8.600px"><defs><linearGradient id="av8116" x1="0" y1="0" x2="1" y2="1"><stop offset="0" stop-color="#ff9a1f"/><stop offset=".55" stop-color="#f2662a"/><stop offset="1" stop-color="#6a3ad6"/></linearGradient></defs><circle cx="10" cy="10" r="9.400" fill="url(#av8116)"/><circle cx="10" cy="10" r="5.600" fill="#fff"/><path d="M10 6.200a3.800 3.800 0 0 1 3.300 5.700l-1.900-1.100a1.600 1.600 0 1 0-2.800 0l-1.900 1.100A3.800 3.800 0 0 1 10 6.200z" fill="#3d2a9a"/><circle cx="10" cy="10.300" r="1.300" fill="#ffb400"/></svg>
<span class="n">PZL P.11c instrume....html</span><span class="o">Otwórz plik</span>
<span class="d" style="left:109.7px"><i style="left:0"></i><i style="left:2.900px"></i><i style="left:5.800px"></i></span>
</div>
<div class="dsep" style="left:125.3px"></div>
<div class="dli" style="left:123.7px">
<svg viewBox="0 0 20 20" style="position:absolute;left:10.700px;top:8.500px;width:8.600px;height:8.600px"><defs><linearGradient id="av8116" x1="0" y1="0" x2="1" y2="1"><stop offset="0" stop-color="#ff9a1f"/><stop offset=".55" stop-color="#f2662a"/><stop offset="1" stop-color="#6a3ad6"/></linearGradient></defs><circle cx="10" cy="10" r="9.400" fill="url(#av8116)"/><circle cx="10" cy="10" r="5.600" fill="#fff"/><path d="M10 6.200a3.800 3.800 0 0 1 3.300 5.700l-1.900-1.100a1.600 1.600 0 1 0-2.800 0l-1.900 1.100A3.800 3.800 0 0 1 10 6.200z" fill="#3d2a9a"/><circle cx="10" cy="10.300" r="1.300" fill="#ffb400"/></svg>
<span class="n">CIŚNIENIE.html</span><span class="o">Otwórz plik</span>
<span class="d" style="left:109.7px"><i style="left:0"></i><i style="left:2.900px"></i><i style="left:5.800px"></i></span>
</div>
<div class="dsep" style="left:249.2px"></div>
<div class="dli" style="left:247.3px">
<svg viewBox="0 0 20 20" style="position:absolute;left:10.700px;top:8.500px;width:8.600px;height:8.600px"><defs><linearGradient id="av8116" x1="0" y1="0" x2="1" y2="1"><stop offset="0" stop-color="#ff9a1f"/><stop offset=".55" stop-color="#f2662a"/><stop offset="1" stop-color="#6a3ad6"/></linearGradient></defs><circle cx="10" cy="10" r="9.400" fill="url(#av8116)"/><circle cx="10" cy="10" r="5.600" fill="#fff"/><path d="M10 6.200a3.800 3.800 0 0 1 3.300 5.700l-1.900-1.100a1.600 1.600 0 1 0-2.800 0l-1.900 1.100A3.800 3.800 0 0 1 10 6.200z" fill="#3d2a9a"/><circle cx="10" cy="10.300" r="1.300" fill="#ffb400"/></svg>
<span class="n">ŁADOWANIE.html</span><span class="o">Otwórz plik</span>
<span class="d" style="left:109.69999999999999px"><i style="left:0"></i><i style="left:2.900px"></i><i style="left:5.800px"></i></span>
</div>
<div class="dsep" style="left:372.8px"></div>
<div style="position:absolute;left:941px;top:4.500px;width:61.500px;height:16.300px;background:#e4e4e4;border-radius:1.500px;font-size:6.350px;line-height:16.300px;text-align:center;color:#222;white-space:nowrap">Pokaż wszystko</div>
<svg viewBox="0 0 10 10" style="position:absolute;left:1009.800px;top:9.700px;width:6.500px;height:6.500px" stroke="#444" stroke-width="1.100" fill="none"><path d="M.5 .5l9 9M9.500 .5l-9 9"/></svg>
</div>
<div id="task">
<svg viewBox="0 0 10 10" style="left:8.200px;top:7.200px;width:8.800px;height:8.800px" fill="#111"><path d="M0 1.400l4.100-.6v4H0zM4.700.7L10 0v4.800H4.700zM0 5.400h4.100v4L0 8.800zM4.700 5.400H10V10l-5.300-.7z"/></svg>
<div id="search"><svg viewBox="0 0 16 16" style="left:5.500px;top:6px;width:9.500px;height:9.500px" fill="none" stroke="#333" stroke-width="1.300" stroke-linecap="round"><circle cx="9.600" cy="6.200" r="4.600"/><path d="M6.300 9.600 1.600 14.400"/></svg><span>Wpisz tu wyszukiwane słowa</span></div>
<svg viewBox="0 0 16 16" style="left:216.300px;top:5.800px;width:10.600px;height:10.600px" fill="none" stroke="#222" stroke-width="1.400"><rect x="3.600" y="4.200" width="7.400" height="7.600"/><path d="M1.200 4.200h12M1.200 11.800h12" stroke-width="1.300"/><path d="M14.300 7.600v5.400" stroke-width="1.300"/><circle cx="14.300" cy="5" r=".9" fill="#222" stroke="none"/></svg>
<svg viewBox="0 0 20 20" style="left:242.500px;top:5px;width:12.500px;height:12.500px"><path d="M1 3.500h6.500l1.500 2H19v11H1z" fill="#f5b921"/><path d="M1 7h18v9.500H1z" fill="#ffd766"/><rect x="5.500" y="10" width="9" height="6.500" fill="#3a8ee6"/><rect x="7.500" y="12.500" width="5" height="4" fill="#ffd766"/></svg>
<svg viewBox="0 0 20 20" style="left:268.700px;top:4.700px;width:13.400px;height:13.400px"><defs><linearGradient id="ed1" x1="0" y1="0" x2="1" y2="1"><stop offset="0" stop-color="#35c1a0"/><stop offset=".5" stop-color="#1b9de2"/><stop offset="1" stop-color="#0c59a4"/></linearGradient></defs><circle cx="10" cy="10" r="9.500" fill="url(#ed1)"/><path d="M3.500 12.500c0-4 3-6.600 6.700-6.600 3.300 0 5.300 2 5.300 4.100 0 1.500-1.100 2.500-2.600 2.500-1.300 0-2-.6-1.800-1.600.4-2-1.500-2.700-3-2-2 .9-2.600 4-1 6.500 1.300 2 4 2.600 6.300 1.600-1.900 2.300-5.300 2.600-7.700.9-1.500-1.100-2.200-3-2.200-5.400z" fill="#fff" opacity=".92"/></svg>
<svg viewBox="0 0 24 20" style="left:294.500px;top:5.300px;width:16px;height:13.300px"><path d="M1 7.500L11 1l10 6.500V17H1z" fill="#1d6fc4"/><path d="M3 5h16v8H3z" fill="#e8f1fb"/><path d="M1 7.500l10 6 10-6V17H1z" fill="#2b88d8"/><path d="M1 17l8-6.500M21 17l-8-6.500" stroke="#1a5da8" stroke-width=".8"/><circle cx="19.500" cy="15.500" r="4.300" fill="#ddd" stroke="#555" stroke-width=".8"/><text x="19.500" y="17.900" font-size="6.500" text-anchor="middle" font-family="Liberation Sans,sans-serif" fill="#222">1</text></svg>
<svg viewBox="0 0 20 20" style="left:320.800px;top:4.800px;width:13.600px;height:13.600px"><defs><linearGradient id="gr1" x1="0" y1="0" x2="0" y2="1"><stop offset="0" stop-color="#3fd05a"/><stop offset="1" stop-color="#1f9e3a"/></linearGradient></defs><rect x=".5" y=".5" width="19" height="19" rx="4" fill="url(#gr1)"/><path d="M6.500 4.500l8.500 9.500-1.800 1.600L5 6.200z" fill="#fff"/></svg>
<svg viewBox="0 0 20 20" style="left:346.600px;top:4.600px;width:13.800px;height:13.800px"><defs><linearGradient id="av8415" x1="0" y1="0" x2="1" y2="1"><stop offset="0" stop-color="#ff9a1f"/><stop offset=".55" stop-color="#f2662a"/><stop offset="1" stop-color="#6a3ad6"/></linearGradient></defs><circle cx="10" cy="10" r="9.400" fill="url(#av8415)"/><circle cx="10" cy="10" r="5.600" fill="#fff"/><path d="M10 6.200a3.800 3.800 0 0 1 3.300 5.700l-1.900-1.100a1.600 1.600 0 1 0-2.800 0l-1.900 1.100A3.800 3.800 0 0 1 10 6.200z" fill="#3d2a9a"/><circle cx="10" cy="10.300" r="1.300" fill="#ffb400"/></svg>
<svg viewBox="0 0 20 20" style="left:373.500px;top:5px;width:13px;height:13px"><rect x="1.500" y="1.500" width="17" height="17" rx="1" fill="#2a2a2a"/><rect x="3" y="3" width="14" height="14" fill="#4a4644"/><circle cx="10.500" cy="11" r="2.300" fill="#f2c21a"/><rect x="4" y="4" width="5" height="3" fill="#777"/></svg>
<svg viewBox="0 0 20 20" style="left:399.500px;top:5px;width:13px;height:13px"><path d="M3 8l4-4h9l-1 5z" fill="#cfcfcf"/><path d="M1.500 9.500h15l2 2v4.500h-17z" fill="#555"/><path d="M4 12h9v2.500H4z" fill="#b8c870"/><path d="M13 1.500v5M11 4.500l2 2.500 2-2.500" stroke="#2a62d8" stroke-width="1.600" fill="none"/><path d="M5 5.500h7M5.500 7h6" stroke="#888" stroke-width=".7"/></svg>
<svg viewBox="0 0 20 20" style="left:425.500px;top:5px;width:13px;height:13px"><path d="M3 3h13l2 5H1z" fill="#222"/><path d="M1 8h17v4H1z" fill="#3a3a3a"/><path d="M4 5h11" stroke="#666" stroke-width=".8"/><circle cx="12.500" cy="11.500" r="2.300" fill="#d6a56a"/><path d="M8.500 19c0-3.500 1.800-5 4-5s4 1.500 4 5z" fill="#3f9a3f"/><path d="M11 9.500h3" stroke="#b33" stroke-width="1.200"/></svg>
<svg viewBox="0 0 20 20" style="left:451.500px;top:4.800px;width:13.600px;height:13.600px"><rect x=".8" y=".8" width="18.400" height="18.400" rx="4.500" fill="#c8202f"/><circle cx="9.500" cy="10.500" r="5" fill="#f4e8ea"/><circle cx="9.500" cy="10.500" r="2" fill="#c8202f"/><circle cx="15" cy="5" r="1.600" fill="#f4e8ea"/></svg>
<svg viewBox="0 0 20 20" style="left:477.500px;top:5px;width:13.400px;height:13.400px"><rect x="1" y="1.500" width="18" height="17" fill="#2f8fe8"/><path d="M1 18.500l7-9 5 6 2.500-2.500 3.500 5.500z" fill="#0f4fae"/><circle cx="14" cy="6" r="1.800" fill="#cfe6ff"/></svg>
<div class="ul" style="left:238.4px;width:21.099999999999994px"></div>
<div class="ul" style="left:262.3px;width:25.30000000000001px"></div>
<div class="ul" style="left:290.8px;width:22.19999999999999px"></div>
<div class="ul" style="left:316.5px;width:20.69999999999999px"></div>
<div class="ul" style="left:369px;width:21.5px"></div>
<div class="ul" style="left:395.3px;width:20.899999999999977px"></div>
<div class="ul" style="left:421.4px;width:20.900000000000034px"></div>
<div class="ul" style="left:447.2px;width:21.30000000000001px"></div>
<div class="ul" style="left:473.5px;width:21.30000000000001px"></div>
<svg viewBox="0 0 10 10" style="left:886.500px;top:8px;width:7px;height:7px" fill="none" stroke="#222" stroke-width="1.300"><path d="M1 7l4-4 4 4"/></svg>
<svg viewBox="0 0 16 16" style="left:898.500px;top:6.500px;width:9.600px;height:9.600px" fill="none" stroke="#333" stroke-width="1.200"><rect x="2.500" y="4" width="8" height="6.500" rx="1.500"/><path d="M10.500 6l3-1.500v5.500l-3-1.500M4 13.500h7M4.500 1.500h6"/></svg>
<svg viewBox="0 0 16 16" style="left:911px;top:6.500px;width:10px;height:10px"><path d="M4 11.500a3 3 0 0 1 .3-6 4.200 4.200 0 0 1 8 .8 2.700 2.700 0 0 1-.4 5.300z" fill="#d8d8d8" stroke="#444" stroke-width="1.300"/><circle cx="11.500" cy="11.500" r="3.300" fill="#e81123"/><path d="M9.800 11.500h3.400" stroke="#fff" stroke-width="1.100"/></svg>
<svg viewBox="0 0 16 16" style="left:923.500px;top:6.500px;width:10px;height:10px" fill="none" stroke="#222" stroke-width="1.300"><rect x="4.500" y="3" width="10" height="7.500"/><path d="M7 13.500h5M9.500 10.500v3"/><path d="M1 4v8h2.500" /><path d="M1 4h2"/></svg>
<svg viewBox="0 0 16 16" style="left:936px;top:6px;width:10.500px;height:10.500px"><path d="M8 1l6 2v5c0 3.500-2.500 5.800-6 7-3.500-1.200-6-3.500-6-7V3z" fill="none" stroke="#222" stroke-width="1.300"/><path d="M8 1v14M2 7.500h12" stroke="#222" stroke-width="1"/><circle cx="11.800" cy="11.800" r="3.400" fill="#13a10e"/><path d="M10.200 11.800l1.200 1.200 2-2.200" stroke="#fff" stroke-width="1" fill="none"/></svg>
<svg viewBox="0 0 16 16" style="left:949px;top:6.500px;width:10px;height:10px" fill="none" stroke="#222" stroke-width="1.200"><path d="M1.500 6h2.500l3.500-3v10L4 10H1.500z"/><path d="M10 5.500a3.500 3.500 0 0 1 0 5M12 3.500a6 6 0 0 1 0 9M14 2a8.500 8.500 0 0 1 0 12" stroke-width="1"/></svg>
<div style="position:absolute;left:958px;top:2.300px;width:40px;text-align:center;font-size:5.800px;line-height:8px;color:#222;letter-spacing:-.05px">15:14</div>
<div style="position:absolute;left:958px;top:11.500px;width:40px;text-align:center;font-size:5.800px;line-height:8px;color:#222;letter-spacing:-.05px">19.04.2021</div>
<svg viewBox="0 0 20 20" style="left:1001px;top:4.500px;width:13.500px;height:13.500px"><path d="M2 2.500h12v9.500H8.500L5.500 15v-3H2z" fill="#222"/><path d="M4 5h8M4 7.200h8M4 9.400h5" stroke="#ddd" stroke-width=".8"/><circle cx="14.500" cy="13.500" r="4.400" fill="#d8d8d8" stroke="#555" stroke-width=".7"/><text x="14.500" y="16" font-size="6.800" text-anchor="middle" font-family="Liberation Sans,sans-serif" fill="#222">1</text></svg>
<i style="position:absolute;left:1021px;top:0;width:1px;height:22px;background:#c4c9c9"></i>
</div>
</body>
</html>
